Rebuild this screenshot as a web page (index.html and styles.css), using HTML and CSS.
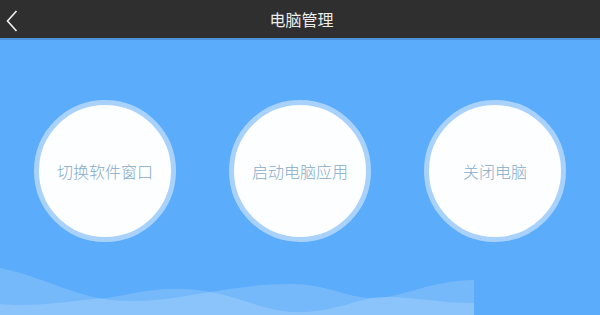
FILE: index.html
```html
<!DOCTYPE html>
<html lang="zh-CN">
<head>
<meta charset="utf-8">
<title>电脑管理</title>
<link rel="stylesheet" href="styles.css">
</head>
<body>
<div class="app">
  <header class="topbar">
    <svg class="back" width="12" height="22" viewBox="0 0 12 22"><polyline points="10.5,1 1.5,11 10.5,21" fill="none" stroke="#f2f2f2" stroke-width="1.6"/></svg>
    <h1 class="title">电脑管理</h1>
  </header>
  <div class="stripe"></div>
  <main class="stage">
    <div class="buttons">
      <button class="circle">切换软件窗口</button>
      <button class="circle">启动电脑应用</button>
      <button class="circle">关闭电脑</button>
    </div>
    <svg class="waves" width="474" height="50" viewBox="0 265 474 50" preserveAspectRatio="none">
      <path d="M0,268 C40,276 75,296 110,300 C170,306 220,284 290,284 C330,284 350,300 378,298 C405,296 430,281 474,280 L474,315 L0,315 Z" fill="#ffffff" fill-opacity="0.16"/>
      <path d="M0,304 C40,308 70,300 107,298 C140,292 170,284 211,292 C250,300 270,314 305,312 C340,310 360,298 380,297 C410,296 440,303 474,303 L474,315 L0,315 Z" fill="#ffffff" fill-opacity="0.16"/>
    </svg>
  </main>
</div>
</body>
</html>
```
FILE: styles.css
```css
* { box-sizing: border-box; }
html, body { margin: 0; padding: 0; }
body {
  width: 600px;
  height: 315px;
  overflow: hidden;
  font-family: "Noto Sans CJK SC", "Noto Sans", sans-serif;
  background: #5bacfb;
}
.app { display: flex; flex-direction: column; height: 315px; }
.topbar {
  height: 38px;
  background: #2f2f2f;
  position: relative;
  display: flex;
  align-items: center;
  justify-content: center;
}
.back { position: absolute; left: 6px; top: 10px; }
.title {
  margin: 0 0 0 3px;
  font-size: 16px;
  font-weight: normal;
  color: #ececec;
  line-height: 1;
}
.stripe { height: 2px; background: #4b92d8; }
.stage {
  flex: 1;
  position: relative;
  background: #5bacfb;
  padding-top: 60px;
}
.buttons {
  display: flex;
  justify-content: center;
  gap: 53px;
  position: relative;
  z-index: 1;
}
.circle {
  width: 142px;
  height: 142px;
  border-radius: 50%;
  border: 5px solid #a8d2fb;
  background: #fdfeff;
  color: #86abc8;
  font-family: "Noto Sans CJK SC", "Noto Sans", sans-serif;
  font-size: 16px;
  font-weight: 300;
  padding: 0;
  display: flex;
  align-items: center;
  justify-content: center;
  cursor: pointer;
}
.waves { position: absolute; left: 0; bottom: 0; display: block; }
```
